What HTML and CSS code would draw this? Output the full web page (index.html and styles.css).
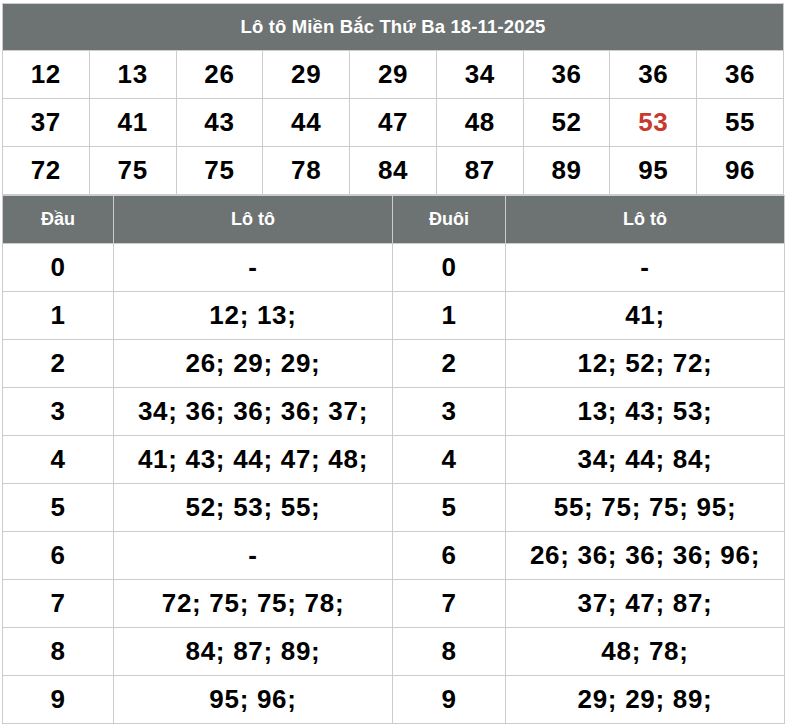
FILE: index.html
```html
<!DOCTYPE html>
<html lang="vi">
<head>
<meta charset="utf-8">
<title>Lô tô Miền Bắc</title>
<link rel="stylesheet" href="styles.css">
</head>
<body>
<div class="wrap">
<table class="grid">
  <tr><th class="title" colspan="9">Lô tô Miền Bắc Thứ Ba 18-11-2025</th></tr>
  <tr><td>12</td><td>13</td><td>26</td><td>29</td><td>29</td><td>34</td><td>36</td><td>36</td><td>36</td></tr>
  <tr><td>37</td><td>41</td><td>43</td><td>44</td><td>47</td><td>48</td><td>52</td><td class="hot">53</td><td>55</td></tr>
  <tr><td>72</td><td>75</td><td>75</td><td>78</td><td>84</td><td>87</td><td>89</td><td>95</td><td>96</td></tr>
</table>
<table class="loto">
  <colgroup><col class="c-head"><col class="c-list"><col class="c-tail"><col class="c-list"></colgroup>
  <tr><th>Đầu</th><th>Lô tô</th><th>Đuôi</th><th>Lô tô</th></tr>
  <tr><td>0</td><td>-</td><td>0</td><td>-</td></tr>
  <tr><td>1</td><td>12; 13;</td><td>1</td><td>41;</td></tr>
  <tr><td>2</td><td>26; 29; 29;</td><td>2</td><td>12; 52; 72;</td></tr>
  <tr><td>3</td><td>34; 36; 36; 36; 37;</td><td>3</td><td>13; 43; 53;</td></tr>
  <tr><td>4</td><td>41; 43; 44; 47; 48;</td><td>4</td><td>34; 44; 84;</td></tr>
  <tr><td>5</td><td>52; 53; 55;</td><td>5</td><td>55; 75; 75; 95;</td></tr>
  <tr><td>6</td><td>-</td><td>6</td><td>26; 36; 36; 36; 96;</td></tr>
  <tr><td>7</td><td>72; 75; 75; 78;</td><td>7</td><td>37; 47; 87;</td></tr>
  <tr><td>8</td><td>84; 87; 89;</td><td>8</td><td>48; 78;</td></tr>
  <tr><td>9</td><td>95; 96;</td><td>9</td><td>29; 29; 89;</td></tr>
</table>
</div>
</body>
</html>
```
FILE: styles.css
```css
html, body {
  margin: 0;
  padding: 0;
  background: #ffffff;
}
.wrap {
  padding: 3px 3px 0 2px;
  font-family: "Liberation Sans", Arial, sans-serif;
  font-weight: bold;
  color: #000;
}
table {
  width: 782px;
  border-collapse: collapse;
  table-layout: fixed;
}
td, th {
  border: 1px solid #cccccc;
  text-align: center;
  padding: 0;
}
.grid td {
  height: 47px;
  font-size: 26px;
  letter-spacing: 0.6px;
}
.grid .title {
  height: 46px;
  background: #6d7373;
  color: #ffffff;
  font-size: 18.5px;
  letter-spacing: 0.15px;
}
.grid .hot {
  color: #c8392e;
}
.loto th {
  height: 47px;
  background: #6d7373;
  color: #ffffff;
  font-size: 18px;
}
.loto td {
  height: 47px;
  font-size: 26px;
  letter-spacing: 0.7px;
}
.c-head { width: 111px; }
.c-tail { width: 113px; }
.c-list { width: 279px; }
```
